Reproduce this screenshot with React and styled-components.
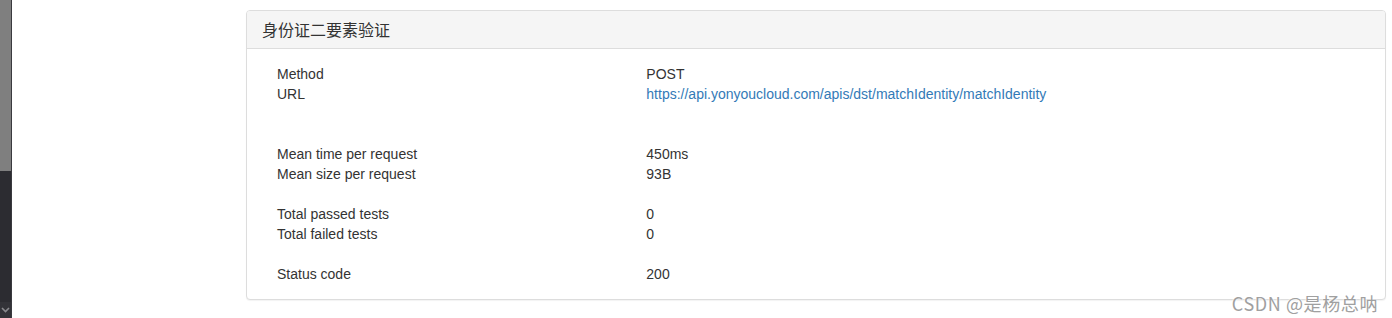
import React from 'react';
import styled, {createGlobalStyle} from 'styled-components';

const GlobalStyle = createGlobalStyle`
  html, body {
    margin: 0;
    padding: 0;
    background: #fff;
  }
  body {
    font-family: "Liberation Sans", Arial, "Noto Sans CJK SC", sans-serif;
    font-size: 14px;
    color: #333;
  }
`;

const Page = styled.div`
  position: relative;
  display: flex;
  width: 1392px;
  height: 318px;
  overflow: hidden;
`;

const Scrollbar = styled.div`
  display: flex;
  flex-direction: column;
  width: 11px;
  height: 100%;
  border-right: 1px solid #3a3a3f;
  background: #2c2c31;
`;

const Thumb = styled.div`
  height: 171px;
  background: #7f7f7f;
`;

const ScrollArrow = styled.div`
  margin-top: auto;
  height: 16px;
  display: flex;
  align-items: center;
  justify-content: center;
  background: #333338;
`;

const Main = styled.div`
  flex: 1;
  padding: 10px 6px 0 234px;
`;

const Panel = styled.div`
  width: 1140px;
  box-sizing: border-box;
  border: 1px solid #ddd;
  border-radius: 4px;
  background: #fff;
  box-shadow: 0 1px 1px rgba(0, 0, 0, 0.05);
`;

const PanelHeading = styled.div`
  padding: 10px 15px;
  line-height: 17px;
  background: #f5f5f5;
  border-bottom: 1px solid #ddd;
  border-radius: 3px 3px 0 0;
`;

const PanelTitle = styled.h3`
  margin: 0;
  font-family: "Noto Sans CJK SC", "Liberation Sans", sans-serif;
  font-size: 16px;
  font-weight: normal;
  color: #333;
`;

const PanelBody = styled.div`
  padding: 15px;
`;

const Row = styled.div`
  display: grid;
  grid-template-columns: 1fr 2fr;
  height: 20px;
  line-height: 20px;
`;

const Cell = styled.div`
  padding: 0 15px;
  white-space: nowrap;
`;

const Link = styled.a`
  color: #337ab7;
  text-decoration: none;
`;

const Watermark = styled.div`
  position: absolute;
  right: 14px;
  bottom: 3px;
  font-family: "Noto Sans CJK SC", sans-serif;
  font-size: 18px;
  line-height: 24px;
  color: #a0a0a0;
  letter-spacing: 0.6px;
  text-shadow: 0 0 2px #fff, 0 0 2px #fff;
`;

const rows = [
  ['Method', 'POST'],
  ['URL', 'https://api.yonyoucloud.com/apis/dst/matchIdentity/matchIdentity', true],
  null,
  null,
  ['Mean time per request', '450ms'],
  ['Mean size per request', '93B'],
  null,
  ['Total passed tests', '0'],
  ['Total failed tests', '0'],
  null,
  ['Status code', '200'],
];

const App = () => {
  return (
    <Page>
      <GlobalStyle />
      <Scrollbar>
        <Thumb />
        <ScrollArrow>
          <svg width="9" height="6" viewBox="0 0 9 6">
            <path d="M1 1 L4.5 4.5 L8 1" fill="none" stroke="#8a8a8e" strokeWidth="1.6" />
          </svg>
        </ScrollArrow>
      </Scrollbar>
      <Main>
        <Panel>
          <PanelHeading>
            <PanelTitle>身份证二要素验证</PanelTitle>
          </PanelHeading>
          <PanelBody>
            {rows.map((r, i) => (
              <Row key={i}>
                <Cell>{r ? r[0] : ''}</Cell>
                <Cell>{r ? (r[2] ? <Link href="#">{r[1]}</Link> : r[1]) : ''}</Cell>
              </Row>
            ))}
          </PanelBody>
        </Panel>
      </Main>
      <Watermark>CSDN @是杨总呐</Watermark>
    </Page>
  );
};

export default App;
